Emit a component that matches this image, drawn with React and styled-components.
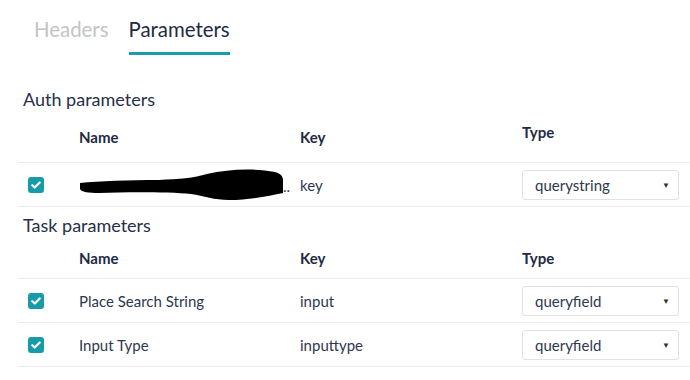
import React from 'react';
import styled, { createGlobalStyle } from 'styled-components';

const GlobalStyle = createGlobalStyle`
  body {
    margin: 0;
    background: #fff;
    font-family: Lato, "Open Sans", sans-serif;
    color: #27304a;
  }
`;

const authParams = [{ name: null, key: 'key', type: 'querystring' }];
const taskParams = [
  { name: 'Place Search String', key: 'input', type: 'queryfield' },
  { name: 'Input Type', key: 'inputtype', type: 'queryfield' },
];

const Page = styled.div`
  width: 690px;
  height: 380px;
  overflow: hidden;
`;

const Tabs = styled.div`
  display: flex;
  gap: 20px;
  padding: 16px 0 0 34px;
`;

const Tab = styled.div`
  font-size: 20.4px;
  line-height: 27px;
  padding-bottom: 9px;
  color: ${(p) => (p.active ? '#1f2a44' : '#c4c4c4')};
  border-bottom: 3px solid ${(p) => (p.active ? '#1a9daa' : 'transparent')};
`;

const Section = styled.div`
  padding-left: 18px;
`;

const Title = styled.h3`
  margin: 0;
  padding-left: 5px;
  font-size: 18px;
  font-weight: 400;
  line-height: 24px;
  padding-top: ${(p) => p.top}px;
`;

const Row = styled.div`
  box-sizing: border-box;
  display: grid;
  grid-template-columns: 61px 221px 222px 1fr;
  align-items: center;
  height: ${(p) => p.h}px;
  border-bottom: 1px solid #ececec;
  font-size: 15px;
`;

const HeadCell = styled.div`
  font-weight: 700;
  font-size: 15px;
  color: #1f2a44;
  transform: translateY(${(p) => p.shift || 0}px);
`;

const Cell = styled.div`
  color: #2f3850;
  white-space: nowrap;
`;

const Check = styled.div`
  margin-left: 10px;
  width: 16px;
  height: 16px;
  border-radius: 3px;
  background: #179ba8;
  display: flex;
  align-items: center;
  justify-content: center;
`;

const Select = styled.div`
  width: 157px;
  height: 30px;
  box-sizing: border-box;
  border: 1px solid #e2e2e2;
  border-radius: 3px;
  display: flex;
  align-items: center;
  justify-content: space-between;
  padding: 0 8px 0 12px;
  color: #2f3850;
  font-size: 15px;
`;

const Caret = styled.span`
  font-size: 8px;
  color: #333;
`;

const Redacted = styled.div`
  display: flex;
  align-items: flex-end;
`;

const CheckBox = () => (
  <Check>
    <svg width="10" height="8" viewBox="0 0 10 8">
      <path d="M1.3 4.2 L3.8 6.5 L8.7 1.5" fill="none" stroke="#fff" strokeWidth="2.2" strokeLinecap="round" strokeLinejoin="round" />
    </svg>
  </Check>
);

const Scribble = () => (
  <Redacted>
    <svg width="204" height="32" viewBox="0 0 204 32">
      <path
        d="M1 14 C20 12 50 11 80 11 C100 10 115 9 128 5 C150 0 175 -1 196 3 C203 5 204 8 204 12 L204 24 C190 27 170 31 150 31 C135 31 125 27 112 25 C90 23 50 23 20 24 C10 24 2 23 1 20 Z"
        fill="#000"
      />
    </svg>
    <span style={{ marginBottom: 6 }}>..</span>
  </Redacted>
);

const ParamRow = ({ p }) => (
  <Row h={44}>
    <CheckBox />
    <Cell>{p.name ? p.name : <Scribble />}</Cell>
    <Cell>{p.key}</Cell>
    <Select>
      <span>{p.type}</span>
      <Caret>▼</Caret>
    </Select>
  </Row>
);

export default function App() {
  return (
    <Page>
      <GlobalStyle />
      <Tabs>
        <Tab>Headers</Tab>
        <Tab active>Parameters</Tab>
      </Tabs>
      <Section>
        <Title top={32}>Auth parameters</Title>
        <Row h={52}>
          <div />
          <HeadCell>Name</HeadCell>
          <HeadCell>Key</HeadCell>
          <HeadCell shift={-5}>Type</HeadCell>
        </Row>
        {authParams.map((p, i) => (
          <ParamRow key={i} p={p} />
        ))}
        <Title top={6}>Task parameters</Title>
        <Row h={42}>
          <div />
          <HeadCell>Name</HeadCell>
          <HeadCell>Key</HeadCell>
          <HeadCell>Type</HeadCell>
        </Row>
        {taskParams.map((p, i) => (
          <ParamRow key={i} p={p} />
        ))}
      </Section>
    </Page>
  );
}
